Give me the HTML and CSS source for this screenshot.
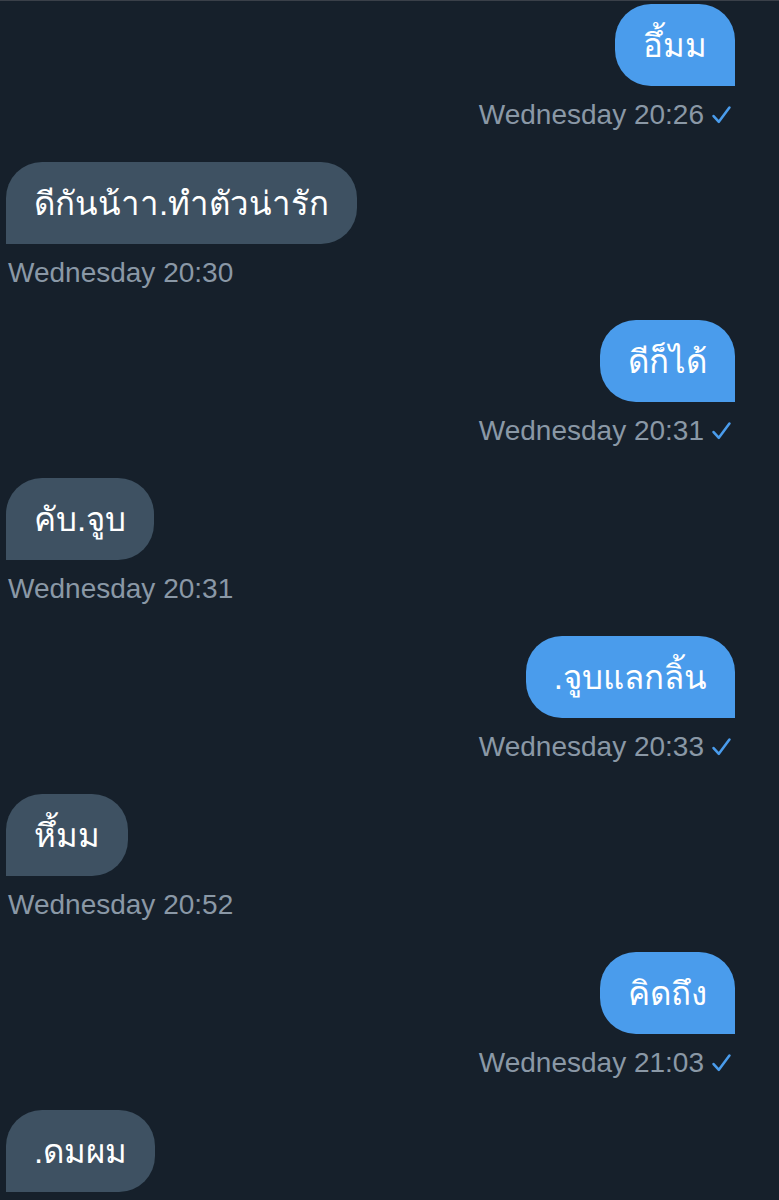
FILE: index.html
```html
<!DOCTYPE html>
<html lang="th">
<head>
    <meta charset="UTF-8">
    <meta name="viewport" content="width=device-width, initial-scale=1.0">
    <title>Messages</title>
    <link rel="stylesheet" href="styles.css">
</head>
<body>
    <main class="thread">
        <div class="msg sent">
            <div class="bubble">อึ้มม</div>
            <div class="meta">Wednesday 20:26 <svg class="check" viewBox="0 0 18 17"><path d="M1.5 9.5 L6.5 15 L16.5 1.5"/></svg></div>
        </div>
        <div class="msg received">
            <div class="bubble">ดีกันน้าา.ทำตัวน่ารัก</div>
            <div class="meta">Wednesday 20:30</div>
        </div>
        <div class="msg sent">
            <div class="bubble">ดีก็ได้</div>
            <div class="meta">Wednesday 20:31 <svg class="check" viewBox="0 0 18 17"><path d="M1.5 9.5 L6.5 15 L16.5 1.5"/></svg></div>
        </div>
        <div class="msg received">
            <div class="bubble">คับ.จูบ</div>
            <div class="meta">Wednesday 20:31</div>
        </div>
        <div class="msg sent">
            <div class="bubble">.จูบแลกลิ้น</div>
            <div class="meta">Wednesday 20:33 <svg class="check" viewBox="0 0 18 17"><path d="M1.5 9.5 L6.5 15 L16.5 1.5"/></svg></div>
        </div>
        <div class="msg received">
            <div class="bubble">หึ้มม</div>
            <div class="meta">Wednesday 20:52</div>
        </div>
        <div class="msg sent">
            <div class="bubble">คิดถึง</div>
            <div class="meta">Wednesday 21:03 <svg class="check" viewBox="0 0 18 17"><path d="M1.5 9.5 L6.5 15 L16.5 1.5"/></svg></div>
        </div>
        <div class="msg received">
            <div class="bubble">.ดมผม</div>
        </div>
    </main>
</body>
</html>
```

FILE: styles.css
```css
body {
    margin: 0;
    background-color: #16202b;
    font-family: "Liberation Sans", Arial, sans-serif;
    border-top: 1px solid #3a4049;
    overflow: hidden;
}
.thread {
    display: flex;
    flex-direction: column;
    gap: 31px;
    padding: 3px 44px 0 6px;
}
.msg {
    display: flex;
    flex-direction: column;
}
.msg.sent {
    align-items: flex-end;
}
.msg.received {
    align-items: flex-start;
}
.bubble {
    height: 82px;
    box-sizing: border-box;
    display: flex;
    align-items: center;
    padding: 0 28px;
    color: #ffffff;
    font-size: 33px;
    border-radius: 36px;
}
.sent .bubble {
    background-color: #4a9cec;
    border-bottom-right-radius: 0;
}
.received .bubble {
    background-color: #3e5162;
    border-bottom-left-radius: 0;
}
.meta {
    margin-top: 13px;
    height: 32px;
    line-height: 32px;
    font-size: 28px;
    color: #8a98a6;
    display: flex;
    align-items: center;
    gap: 8px;
}
.received .meta {
    padding-left: 2px;
}
.sent .meta {
    padding-right: 4px;
}
.check {
    width: 19px;
    height: 18px;
    fill: none;
    stroke: #4a9cec;
    stroke-width: 2.4;
    stroke-linecap: round;
    stroke-linejoin: round;
}
```
